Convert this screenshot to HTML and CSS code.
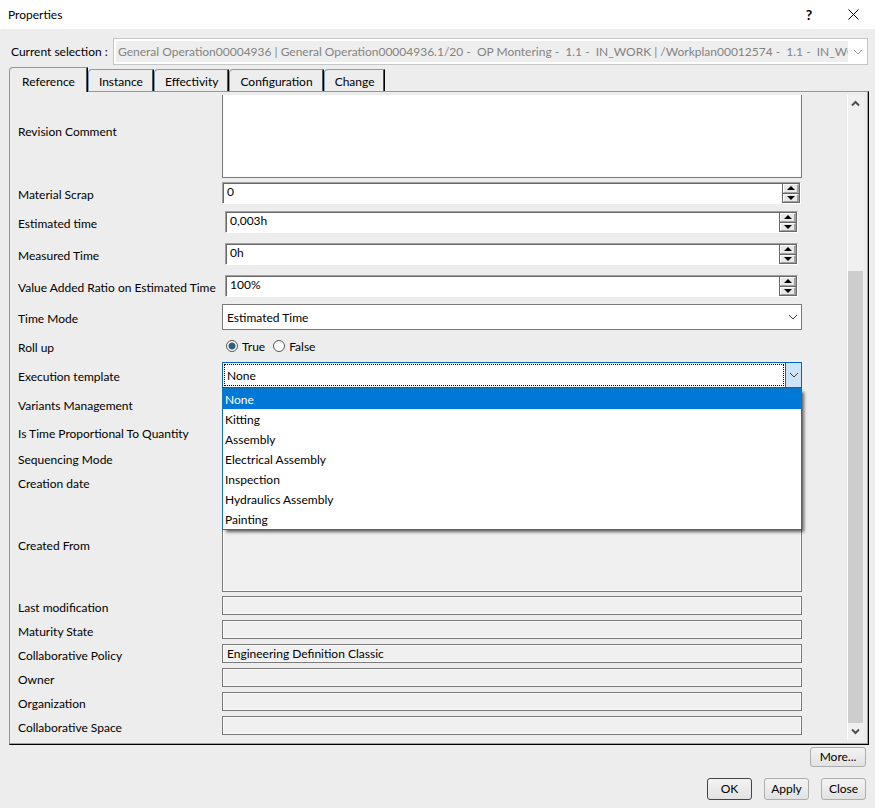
FILE: index.html
```
<!DOCTYPE html>
<html lang="en">
<head>
    <meta charset="utf-8">
    <title>Properties</title>
    <link rel="stylesheet" href="styles.css">
</head>
<body>
    <svg class="defs" width="0" height="0">
        <symbol id="chevron" viewBox="0 0 10 6"><path d="M1 1 L5 5 L9 1" fill="none" stroke="currentColor"/></symbol>
        <symbol id="up" viewBox="0 0 8 4"><path d="M0 4 L4 0 L8 4 Z"/></symbol>
        <symbol id="down" viewBox="0 0 8 4"><path d="M0 0 L4 4 L8 0 Z"/></symbol>
    </svg>

    <header class="titlebar">
        <h1>Properties</h1>
        <button class="help" type="button">?</button>
        <button class="close" type="button" aria-label="Close window">
            <svg width="11" height="11" viewBox="0 0 11 11"><path d="M0.5 0.5 L10.5 10.5 M10.5 0.5 L0.5 10.5" stroke="#000"/></svg>
        </button>
    </header>

    <div class="selection">
        <label for="current">Current selection :</label>
        <div class="current">
            <select id="current" disabled>
                <option>General Operation00004936 | General Operation00004936.1/20 -&nbsp; OP Montering -&nbsp; 1.1 -&nbsp; IN_WORK | /Workplan00012574 -&nbsp; 1.1 -&nbsp; IN_WORK</option>
            </select>
            <svg class="arrow" width="10" height="6"><use href="#chevron"/></svg>
        </div>
    </div>

    <nav class="tabs">
        <button type="button" class="tab active">Reference</button>
        <button type="button" class="tab">Instance</button>
        <button type="button" class="tab">Effectivity</button>
        <button type="button" class="tab">Configuration</button>
        <button type="button" class="tab">Change</button>
    </nav>

    <main class="panel">
        <form class="form" id="properties">
            <div class="row tall">
                <label for="revision">Revision Comment</label>
                <textarea id="revision"></textarea>
            </div>
            <div class="row scrap">
                <label for="scrap">Material Scrap</label>
                <div class="spin">
                    <input type="text" id="scrap" value="0">
                    <div class="steps">
                        <button type="button" aria-label="Increase"><svg width="8" height="4"><use href="#up"/></svg></button>
                        <button type="button" aria-label="Decrease"><svg width="8" height="4"><use href="#down"/></svg></button>
                    </div>
                </div>
            </div>
            <div class="row time">
                <label for="estimated">Estimated time</label>
                <div class="spin">
                    <input type="text" id="estimated" value="0,003h">
                    <div class="steps">
                        <button type="button" aria-label="Increase"><svg width="8" height="4"><use href="#up"/></svg></button>
                        <button type="button" aria-label="Decrease"><svg width="8" height="4"><use href="#down"/></svg></button>
                    </div>
                </div>
            </div>
            <div class="row time">
                <label for="measured">Measured Time</label>
                <div class="spin">
                    <input type="text" id="measured" value="0h">
                    <div class="steps">
                        <button type="button" aria-label="Increase"><svg width="8" height="4"><use href="#up"/></svg></button>
                        <button type="button" aria-label="Decrease"><svg width="8" height="4"><use href="#down"/></svg></button>
                    </div>
                </div>
            </div>
            <div class="row time">
                <label for="ratio">Value Added Ratio on Estimated Time</label>
                <div class="spin">
                    <input type="text" id="ratio" value="100%">
                    <div class="steps">
                        <button type="button" aria-label="Increase"><svg width="8" height="4"><use href="#up"/></svg></button>
                        <button type="button" aria-label="Decrease"><svg width="8" height="4"><use href="#down"/></svg></button>
                    </div>
                </div>
            </div>
            <div class="row combo">
                <label for="mode">Time Mode</label>
                <div class="dropdown">
                    <select id="mode">
                        <option>Estimated Time</option>
                    </select>
                    <span class="arrow"><svg width="10" height="6"><use href="#chevron"/></svg></span>
                </div>
            </div>
            <div class="row medium">
                <span class="label">Roll up</span>
                <div class="radios">
                    <input type="radio" name="rollup" id="r1" checked><label for="r1">True</label>
                    <input type="radio" name="rollup" id="r2"><label for="r2">False</label>
                </div>
            </div>
            <div class="row combo">
                <label for="template">Execution template</label>
                <div class="dropdown open">
                    <select id="template">
                        <option>None</option>
                    </select>
                    <span class="arrow"><svg width="10" height="6"><use href="#chevron"/></svg></span>
                    <ul class="list" role="listbox" aria-label="Execution template">
                        <li role="option" aria-selected="true" class="selected">None</li>
                        <li role="option">Kitting</li>
                        <li role="option">Assembly</li>
                        <li role="option">Electrical Assembly</li>
                        <li role="option">Inspection</li>
                        <li role="option">Hydraulics Assembly</li>
                        <li role="option">Painting</li>
                    </ul>
                </div>
            </div>
            <div class="row medium">
                <label for="variants">Variants Management</label>
                <input type="text" id="variants" readonly>
            </div>
            <div class="row medium">
                <label for="proportional">Is Time Proportional To Quantity</label>
                <input type="text" id="proportional" readonly>
            </div>
            <div class="row">
                <label for="sequencing">Sequencing Mode</label>
                <input type="text" id="sequencing" readonly>
            </div>
            <div class="row">
                <label for="created">Creation date</label>
                <input type="text" id="created" readonly>
            </div>
            <div class="row tall">
                <label for="from">Created From</label>
                <textarea id="from" readonly></textarea>
            </div>
            <div class="row">
                <label for="modified">Last modification</label>
                <input type="text" id="modified" readonly>
            </div>
            <div class="row">
                <label for="maturity">Maturity State</label>
                <input type="text" id="maturity" readonly>
            </div>
            <div class="row">
                <label for="policy">Collaborative Policy</label>
                <input type="text" id="policy" value="Engineering Definition Classic" readonly>
            </div>
            <div class="row">
                <label for="owner">Owner</label>
                <input type="text" id="owner" readonly>
            </div>
            <div class="row">
                <label for="organization">Organization</label>
                <input type="text" id="organization" readonly>
            </div>
            <div class="row">
                <label for="space">Collaborative Space</label>
                <input type="text" id="space" readonly>
            </div>
        </form>

        <div class="scrollbar">
            <button type="button" aria-label="Scroll up"><svg width="9" height="7" viewBox="0 0 9 7"><path d="M1 5.5 L4.5 2 L8 5.5" fill="none" stroke="#505050" stroke-width="2"/></svg></button>
            <div class="track"><div class="thumb"></div></div>
            <button type="button" aria-label="Scroll down"><svg width="9" height="7" viewBox="0 0 9 7"><path d="M1 1.5 L4.5 5 L8 1.5" fill="none" stroke="#505050" stroke-width="2"/></svg></button>
        </div>
    </main>

    <footer>
        <div class="buttons">
            <button type="button" class="btn more">More...</button>
        </div>
        <div class="buttons">
            <button type="button" class="btn default">OK</button>
            <button type="button" class="btn">Apply</button>
            <button type="button" class="btn">Close</button>
        </div>
    </footer>
</body>
</html>
```
FILE: styles.css
```
*
{
    box-sizing: border-box;
}
body
{
    margin: 0;
    min-height: 100vh;
    display: flex;
    flex-direction: column;
    background: #ededed;
    color: #000;
    font-family: Lato, "Open Sans", sans-serif;
    font-size: 12px;
    line-height: 16px;
}
button, input, select, textarea
{
    margin: 0;
    padding: 0;
    border: 0;
    border-radius: 0;
    background: none;
    color: inherit;
    font: inherit;
    outline: none;
}
select
{
    appearance: none;
}
svg
{
    display: block;
}
.defs
{
    position: absolute;
}

/* title bar */
.titlebar
{
    display: flex;
    align-items: center;
    height: 29px;
    padding: 0 8px;
    background: #fff;
}
.titlebar h1
{
    flex: 1;
    margin: 0;
    font-size: 12px;
    font-weight: normal;
}
.titlebar .help
{
    width: 28px;
    margin-right: 16px;
    font-size: 14px;
    font-weight: bold;
}
.titlebar .close
{
    display: flex;
    justify-content: center;
    width: 28px;
}

/* current selection */
.selection
{
    display: flex;
    align-items: center;
    padding: 9px 7px 2px 11px;
}
.selection label
{
    width: 102px;
    white-space: nowrap;
}
.current
{
    display: flex;
    align-items: center;
    flex: 1;
    min-width: 0;
    height: 27px;
    padding: 2px;
    border: 1px solid #c6c6c6;
    background: #fff;
    color: #838383;
}
.current select
{
    flex: 1;
    min-width: 0;
    height: 21px;
    padding-left: 2px;
    background: #eee;
    opacity: 1;
}
.current .arrow
{
    margin: 0 2px 0 5px;
    color: #a0a0a0;
}

/* tabs */
.tabs
{
    display: flex;
    align-items: flex-start;
    height: 24px;
    padding-left: 9px;
}
.tab
{
    height: 22px;
    margin-top: 2px;
    padding: 2px 10px 0;
    border-top: 1px solid #7f9db9;
    border-left: 1px solid #7f9db9;
    border-right: 1px solid #000;
    border-top-left-radius: 4px;
    box-shadow: inset -1px 0 #555;
}
/* runs over the panel's top border */
.tab.active
{
    position: relative;
    height: 25px;
    margin-top: 0;
    padding: 3px 12px 0;
    background: #ededed;
}

/* panel */
.panel
{
    display: flex;
    flex: 1;
    margin: 0 6px 0 9px;
    padding: 3px 4px 4px 8px;
    border-top: 1px solid #7f9db9;
    border-left: 1px solid #7f9db9;
    border-right: 1px solid #000;
    border-bottom: 1px solid #000;
    box-shadow: inset -1px -1px #a0a0a0;
}
.form
{
    display: flex;
    flex-direction: column;
    justify-content: flex-end;
    flex: 1;
    height: 645px;
    padding: 0 45px 2px 0;
    overflow: hidden;
}
.row
{
    display: flex;
    flex: none;
    align-items: center;
    height: 24px;
}
.row > label, .row > .label
{
    flex: none;
    width: 204px;
    padding-top: 4px;
    white-space: nowrap;
}
.row.tall
{
    height: 100px;
}
.row.scrap
{
    height: 26px;
}
.row.time
{
    height: 32px;
}
.row.combo
{
    height: 30px;
}
.row.medium
{
    height: 28px;
}
.row > input, .row > textarea
{
    flex: 1;
    min-width: 0;
    height: 19px;
    margin-bottom: 1px;
    padding: 0 4px;
    border: 1px solid #7a7a7a;
    background: #f0f0f0;
    box-shadow: inset 0 0 0 1px #fafafa;
}
.row > textarea
{
    height: 96px;
    margin: 0;
    background: #fff;
    resize: none;
}
.row > textarea:read-only
{
    background: #f0f0f0;
}

/* spin boxes */
.spin
{
    display: flex;
    flex: 1;
    height: 22px;
    margin-right: 1px;
    border: 1px solid #fff;
    border-top-color: #a0a0a0;
    border-left-color: #a0a0a0;
    background: #fff;
    box-shadow: inset 1px 1px #696969;
}
.row.time .spin
{
    margin: 0 4px 0 3px;
}
.spin input
{
    flex: 1;
    min-width: 0;
    padding: 0 3px 2px 4px;
}
.steps
{
    display: flex;
    flex-direction: column;
    width: 18px;
    height: 20px;
    border: 1px solid #696969;
    background: #696969;
    gap: 1px;
}
.steps button
{
    display: flex;
    flex: 1;
    align-items: center;
    justify-content: center;
    border: 1px solid #fff;
    border-right: 2px solid #a0a0a0;
    border-bottom-color: #a0a0a0;
    background: #e8e8e8;
}

/* drop-downs */
.dropdown
{
    position: relative;
    display: flex;
    flex: 1;
    height: 26px;
    border: 1px solid #7a7a7a;
    background: #fff;
}
.dropdown select
{
    flex: 1;
    padding: 1px 0 0 4px;
}
.dropdown .arrow
{
    display: flex;
    align-items: center;
    justify-content: center;
    width: 17px;
    color: #404040;
}
.dropdown.open
{
    border-color: #0067b0;
}
.dropdown.open select
{
    margin: 1px;
    padding-left: 2px;
    border: 1px dotted #000;
}
.dropdown.open .arrow
{
    width: 16px;
    border-left: 1px solid #0067b0;
    background: #cce4f7;
}
.list
{
    position: absolute;
    z-index: 1;
    top: 25px;
    left: -1px;
    right: -1px;
    margin: 0;
    padding: 0;
    border: 1px solid #1173b8;
    background: #fff;
    box-shadow: 3px 3px 3px -1px rgba(0, 0, 0, 0.6);
    list-style: none;
}
.list li
{
    height: 20px;
    padding-left: 2px;
    line-height: 22px;
}
.list .selected
{
    background: #0078d7;
    color: #fff;
}

/* radios */
.radios
{
    display: flex;
    align-items: center;
    padding-left: 4px;
}
.radios input
{
    appearance: none;
    width: 12px;
    height: 12px;
    margin-right: 4px;
    border: 1px solid #555;
    border-radius: 50%;
    background: #fff;
}
.radios input:checked
{
    background: radial-gradient(#2d6178 3px, #fff 4px);
}
.radios label
{
    margin-right: 8px;
    padding-top: 1px;
}

/* scrollbar */
.scrollbar
{
    display: flex;
    flex-direction: column;
    width: 17px;
    border-left: 1px solid #fff;
    background: #f0f0f0;
}
.scrollbar button
{
    display: flex;
    align-items: center;
    justify-content: center;
    width: 15px;
    height: 17px;
}
.track
{
    display: flex;
    flex: 1;
    align-items: flex-end;
}
.thumb
{
    width: 15px;
    height: 74%;
    background: #cdcdcd;
}

/* bottom buttons */
footer
{
    padding: 2px 9px 8px;
}
.buttons
{
    display: flex;
    justify-content: flex-end;
    gap: 12px;
    margin-bottom: 11px;
}
.buttons:last-child
{
    margin-bottom: 0;
}
.btn
{
    width: 45px;
    height: 22px;
    border: 1px solid #adadad;
    border-radius: 3px;
    background: linear-gradient(#f3f3f3, #e2e2e2);
}
.btn.more
{
    width: 56px;
    height: 20px;
}
.btn.default
{
    border-color: #444;
}
```
